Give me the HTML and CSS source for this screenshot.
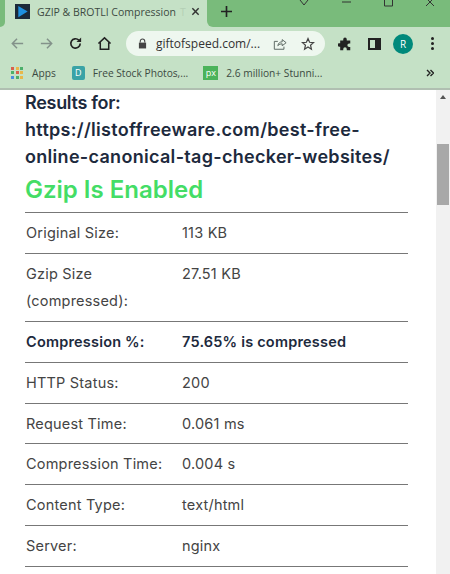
FILE: index.html
```html
<html>
<head>
<link rel="stylesheet" href="styles.css">
</head>
<body>
<div class="tabstrip">
    <div class="stripleft"></div>
    <div class="tab">
        <svg class="favicon" viewBox="0 0 16 16"><rect width="16" height="16" fill="#1b2a3a"/><path d="M3.5 2 L13.5 8 L3.5 14 Z" fill="#1e90e0"/></svg>
        <span class="tabtitle">GZIP &amp; BROTLI Compression</span><span class="tabfade">T</span>
        <svg class="tabclose" viewBox="0 0 10 10"><path d="M1.5 1.5 L8.5 8.5 M8.5 1.5 L1.5 8.5" stroke="#333" stroke-width="1.6"/></svg>
    </div>
    <div class="stripright">
        <svg class="newtab" viewBox="0 0 12 12"><path d="M6 0 V12 M0 6 H12" stroke="#222" stroke-width="1.8"/></svg>
        <div class="winbtns">
            <svg viewBox="0 0 12 12"><path d="M2 0 L6 5 L10 0" fill="none" stroke="#333"/></svg>
            <svg viewBox="0 0 12 12"><path d="M2 2 H11" stroke="#333"/></svg>
            <svg viewBox="0 0 12 12"><path d="M2.5 -2 H10.5 V6 H2.5 Z" fill="none" stroke="#333"/></svg>
            <svg viewBox="0 0 12 12"><path d="M2 -2 L10 6 M10 -2 L2 6" stroke="#333"/></svg>
        </div>
    </div>
</div>
<div class="toolbar">
    <svg class="navicon" viewBox="0 0 16 16"><path d="M14 8 H2.5 M7.5 3 L2.5 8 L7.5 13" fill="none" stroke="#83928a" stroke-width="1.6"/></svg>
    <svg class="navicon" viewBox="0 0 16 16"><path d="M2 8 H13.5 M8.5 3 L13.5 8 L8.5 13" fill="none" stroke="#83928a" stroke-width="1.6"/></svg>
    <svg class="navicon" viewBox="0 0 16 16"><path d="M13 8 A5 5 0 1 1 11.5 4.4" fill="none" stroke="#222" stroke-width="1.8"/><path d="M14 1.5 V6.5 H9 Z" fill="#222"/></svg>
    <svg class="navicon" viewBox="0 0 16 16"><path d="M1.5 8 L8 2 L14.5 8 M3.5 7 V14 H12.5 V7" fill="none" stroke="#222" stroke-width="1.6"/></svg>
    <div class="omnibox">
        <svg class="lock" viewBox="0 0 10 12"><path d="M2.5 5 V3.5 A2.5 2.5 0 0 1 7.5 3.5 V5" fill="none" stroke="#444" stroke-width="1.2"/><rect x="1" y="5" width="8" height="6.5" fill="#444"/></svg>
        <span class="url">giftofspeed.com/...</span>
        <svg class="omniicon share" viewBox="0 0 16 16"><path d="M5.5 10 C6 7 8 5.5 10.5 5.5 V3 L15 6.5 L10.5 10 V7.8 C8.5 7.8 7 8.5 5.5 10 Z M12.5 11 V14 H1.5 V5 H5.5" fill="none" stroke="#5a6660" stroke-width="1.1"/></svg>
        <svg class="omniicon star" viewBox="0 0 16 16"><path d="M8 1.8 L9.8 6 L14.3 6.4 L10.9 9.4 L11.9 13.9 L8 11.5 L4.1 13.9 L5.1 9.4 L1.7 6.4 L6.2 6 Z" fill="none" stroke="#444" stroke-width="1.4"/></svg>
    </div>
    <svg class="puzzle" viewBox="0 0 16 16"><path d="M6 2.5 A2 2 0 0 1 10 2.5 V4 H14 V7.5 H12.7 A2 2 0 0 0 12.7 11.5 H14 V15 H10 V13.7 A2 2 0 0 0 6 13.7 V15 H2.5 V11 H1.5 A2 2 0 0 1 1.5 7 H2.5 V4 H6 Z" fill="#222"/></svg>
    <div class="sidepanel"></div>
    <div class="avatar">R</div>
    <div class="dots"><i></i><i></i><i></i></div>
</div>
<div class="bookmarks">
    <div class="appsgrid">
        <i class="r"></i><i class="y"></i><i class="g"></i>
        <i class="g"></i><i class="r"></i><i class="y"></i>
        <i class="b"></i><i class="g"></i><i class="y"></i>
    </div>
    <span class="bm apps">Apps</span>
    <div class="bmicon teal">D</div>
    <span class="bm free">Free Stock Photos,...</span>
    <div class="bmicon green">px</div>
    <span class="bm">2.6 million+ Stunni...</span>
    <svg class="more" viewBox="0 0 8 8"><path d="M1 1 L4 4 L1 7 M4.5 1 L7.5 4 L4.5 7" fill="none" stroke="#222" stroke-width="1.4"/></svg>
</div>
<div class="viewport">
    <div class="page">
        <h3><span class="resultsfor">Results for:</span><br><span class="testedurl">https://listoffreeware.com/best-free-online-canonical-tag-checker-websites/</span></h3>
        <h2>Gzip Is Enabled</h2>
        <table>
            <tr><td>Original Size:</td><td>113 KB</td></tr>
            <tr><td>Gzip Size (compressed):</td><td>27.51 KB</td></tr>
            <tr class="strong"><td>Compression %:</td><td>75.65% is compressed</td></tr>
            <tr><td>HTTP Status:</td><td>200</td></tr>
            <tr><td>Request Time:</td><td>0.061 ms</td></tr>
            <tr><td>Compression Time:</td><td>0.004 s</td></tr>
            <tr><td>Content Type:</td><td>text/html</td></tr>
            <tr><td>Server:</td><td>nginx</td></tr>
        </table>
    </div>
    <div class="scrollbar">
        <div class="arrow"></div>
        <div class="thumb"></div>
    </div>
</div>
</body></html>
```

FILE: styles.css
```css
body, html {
    margin: 0;
    padding: 0;
    height: 100%;
    overflow: hidden;
}
body {
    display: flex;
    flex-direction: column;
    font-family: "Open Sans", sans-serif;
    background: white;
}
.tabstrip {
    height: 27px;
    flex: none;
    display: flex;
    background: #c5e1c6;
}
.stripleft {
    width: 5px;
    flex: none;
    background: #79bb7b;
    border-bottom-right-radius: 6px;
}
.tab {
    width: 202px;
    flex: none;
    box-sizing: border-box;
    padding: 0 0 4px 10px;
    display: flex;
    align-items: center;
}
.favicon {
    width: 15px;
    height: 15px;
    flex: none;
    margin-right: 7px;
}
.tabtitle {
    white-space: nowrap;
    font-size: 10.5px;
    color: #3c4a42;
}
.tabfade {
    margin-left: 4px;
    width: 11px;
    font-size: 10.5px;
    color: #b4cfb5;
}
.tabclose {
    width: 9px;
    height: 9px;
    flex: none;
}
.stripright {
    flex: 1;
    display: flex;
    background: #79bb7b;
    border-bottom-left-radius: 6px;
}
.newtab {
    width: 11px;
    height: 11px;
    margin: 6px 0 0 14px;
}
.winbtns {
    margin-left: auto;
    margin-right: 14px;
    display: flex;
    gap: 30px;
}
.winbtns svg {
    width: 12px;
    height: 12px;
}
.toolbar {
    height: 33px;
    flex: none;
    display: flex;
    align-items: center;
    background: #c5e1c6;
    padding-left: 10px;
}
.navicon {
    width: 15px;
    height: 15px;
    margin-right: 14px;
}
.omnibox {
    width: 199px;
    height: 25px;
    flex: none;
    box-sizing: border-box;
    padding: 0 10px 0 12px;
    display: flex;
    align-items: center;
    background: #eef7ef;
    border-radius: 13px;
}
.lock {
    width: 9px;
    height: 11px;
    margin-right: 9px;
}
.url {
    font-size: 12px;
    color: #333;
    white-space: nowrap;
}
.omniicon {
    width: 14px;
    height: 14px;
}
.omniicon.share {
    margin-left: auto;
}
.omniicon.star {
    margin-left: 14px;
}
.puzzle {
    width: 14px;
    height: 14px;
    margin-left: 13px;
}
.sidepanel {
    width: 5px;
    height: 8px;
    margin-left: 16px;
    border: 2px solid #222;
    border-right-width: 6px;
    flex: none;
}
.avatar {
    width: 20px;
    height: 20px;
    margin-left: 12px;
    flex: none;
    border-radius: 50%;
    background: #00897b;
    color: white;
    font-size: 10px;
    line-height: 20px;
    text-align: center;
}
.dots {
    margin-left: 18px;
    display: flex;
    flex-direction: column;
    gap: 2px;
}
.dots i {
    width: 3px;
    height: 3px;
    border-radius: 50%;
    background: #222;
}
.bookmarks {
    height: 30px;
    flex: none;
    box-sizing: border-box;
    display: flex;
    align-items: center;
    background: #c5e1c6;
    border-bottom: 2px solid #b0bfb1;
    padding: 0 0 3px 11px;
    font-size: 10.2px;
    color: #3c4a42;
}
.appsgrid {
    display: grid;
    grid-template-columns: repeat(3, 3px);
    grid-auto-rows: 3px;
    gap: 1.5px;
    margin-right: 9px;
}
.appsgrid i.r { background: #d9604c; }
.appsgrid i.y { background: #e8b84a; }
.appsgrid i.g { background: #4caf6a; }
.appsgrid i.b { background: #4a8ee0; }
.bm {
    white-space: nowrap;
}
.bm.apps {
    margin-right: 16px;
}
.bm.free {
    margin-right: 15px;
}
.bmicon {
    width: 13px;
    height: 14px;
    margin-right: 8px;
    color: white;
    font-size: 9px;
    line-height: 14px;
    text-align: center;
}
.bmicon.teal {
    background: #3aa3a6;
    border-radius: 2px;
}
.bmicon.green {
    width: 15px;
    margin-right: 8px;
    background: #4bb35a;
}
.more {
    width: 8px;
    height: 8px;
    margin-left: auto;
    margin-right: 16px;
}
.viewport {
    flex: 1;
    display: flex;
    min-height: 0;
    overflow: hidden;
}
.page {
    flex: 1;
    padding: 0 0 0 25px;
    color: #1d2a3d;
    font-family: "Inter", sans-serif;
}
.page h3 {
    margin: -1px 0 0;
    width: 385px;
    font-size: 18px;
    line-height: 27px;
    font-weight: 600;
}
.resultsfor {
    letter-spacing: -0.3px;
}
.testedurl {
    letter-spacing: 0.3px;
}
.page h2 {
    margin: 3px 0 6px;
    font-size: 24px;
    line-height: 33px;
    font-weight: 600;
    color: #44dd66;
}
.page table {
    width: 383px;
    border-collapse: collapse;
    border-top: 1px solid #777;
    font-size: 14.5px;
    letter-spacing: 0.2px;
    line-height: 26.9px;
    color: #444;
}
.page td {
    border-bottom: 1px solid #777;
    padding: 7px 2px 6px;
    vertical-align: top;
}
.page td:first-child {
    width: 152px;
    padding-left: 1px;
}
.strong td {
    font-weight: 600;
    color: #1d2a3d;
}
.scrollbar {
    width: 14px;
    flex: none;
    background: #f1f1f1;
}
.arrow {
    margin: 5px auto 0;
    width: 0;
    height: 0;
    border: 3px solid transparent;
    border-top: 0;
    border-bottom: 4px solid #555;
}
.thumb {
    margin: 45px 1px 0;
    height: 61px;
    background: #a8a8a8;
}
```
